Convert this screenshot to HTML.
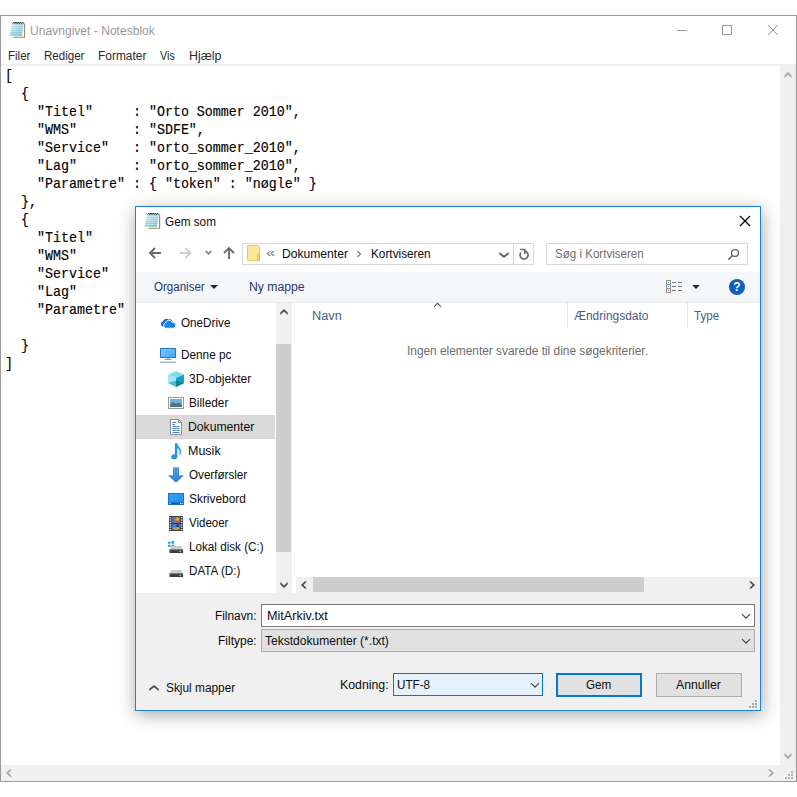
<!DOCTYPE html><html lang="da"><head><meta charset="utf-8"><title>Unavngivet - Notesblok</title><style>
html,body{margin:0;padding:0;background:#fff;}
body{width:797px;height:797px;overflow:hidden;position:relative;font-family:"Liberation Sans",sans-serif;font-size:12px;}
#root{position:absolute;left:0;top:0;width:797px;height:797px;overflow:hidden;}
#root div,#root svg,#root span{position:absolute;box-sizing:border-box;}
#root span{white-space:pre;transform-origin:0 0;line-height:20px;display:block;}
</style></head><body><div id="root">
<div style="left:0px;top:15px;width:797px;height:767px;background:#fff;border:1px solid #9a9a9a;"></div>
<div style="left:1px;top:64px;width:795px;height:2px;background:#f0f0f0;"></div>
<svg style="left:9px;top:21px" width="17" height="18" viewBox="0 0 17 18">
<defs><linearGradient id="npg" x1="0" y1="0" x2="1" y2="1"><stop offset="0" stop-color="#d6eef5"/><stop offset="1" stop-color="#62b2cc"/></linearGradient></defs>
<path d="M4.5 2.5 H15.5 V16.2 H4.5 Z" fill="#fff"/>
<path d="M15.6 2.5 V16.3 H4.2" stroke="#a08a58" stroke-width="1.1" fill="none"/>
<path d="M3.2 1.8 H14.8 L12.8 14.8 H0.5 Z" fill="url(#npg)"/>
<path d="M3 4.6H14.2 M2.6 6.6H13.9 M2.2 8.6H13.6 M1.8 10.6H13.3 M1.4 12.6H13" stroke="#eaf6fa" stroke-width="0.7" opacity=".75"/>
<path d="M3.6 2.6 l1.1-1.6 1.1 1.6 1.1-1.6 1.1 1.6 1.1-1.6 1.1 1.6 1.1-1.6 1.1 1.6 1.1-1.6 1.1 1.6" stroke="#2a3a44" stroke-width="1" fill="none"/>
</svg>
<span style="left:29.99px;top:20.84px;font-size:12px;color:#999;transform:scaleX(1.0065);">Unavngivet - Notesblok</span>
<svg style="left:670px;top:20px" width="115" height="20" viewBox="0 0 115 20">
<path d="M7 10.5H17" stroke="#999" stroke-width="1"/>
<rect x="52.5" y="5.5" width="9" height="9" fill="none" stroke="#999" stroke-width="1"/>
<path d="M98 5 L108 15 M108 5 L98 15" stroke="#999" stroke-width="1"/>
</svg>
<span style="left:7.64px;top:45.84px;font-size:12px;color:#2a2a2a;transform:scaleX(0.9618);">Filer</span>
<span style="left:43.64px;top:45.84px;font-size:12px;color:#2a2a2a;transform:scaleX(0.9620);">Rediger</span>
<span style="left:97.71px;top:45.84px;font-size:12px;color:#2a2a2a;transform:scaleX(0.9937);">Formater</span>
<span style="left:160.30px;top:45.84px;font-size:12px;color:#2a2a2a;transform:scaleX(0.9062);">Vis</span>
<span style="left:188.57px;top:45.84px;font-size:12px;color:#2a2a2a;transform:scaleX(1.0333);">Hjælp</span>
<span style="left:5px;top:66.22px;font-size:14.2px;color:#000;-webkit-text-stroke:0.15px #000;font-family:'Liberation Mono', monospace;transform:scaleX(0.9390);">[</span>
<span style="left:5px;top:84.22px;font-size:14.2px;color:#000;-webkit-text-stroke:0.15px #000;font-family:'Liberation Mono', monospace;transform:scaleX(0.9390);">  {</span>
<span style="left:5px;top:102.22px;font-size:14.2px;color:#000;-webkit-text-stroke:0.15px #000;font-family:'Liberation Mono', monospace;transform:scaleX(0.9390);">    "Titel"     : "Orto Sommer 2010",</span>
<span style="left:5px;top:120.22px;font-size:14.2px;color:#000;-webkit-text-stroke:0.15px #000;font-family:'Liberation Mono', monospace;transform:scaleX(0.9390);">    "WMS"       : "SDFE",</span>
<span style="left:5px;top:138.22px;font-size:14.2px;color:#000;-webkit-text-stroke:0.15px #000;font-family:'Liberation Mono', monospace;transform:scaleX(0.9390);">    "Service"   : "orto_sommer_2010",</span>
<span style="left:5px;top:156.22px;font-size:14.2px;color:#000;-webkit-text-stroke:0.15px #000;font-family:'Liberation Mono', monospace;transform:scaleX(0.9390);">    "Lag"       : "orto_sommer_2010",</span>
<span style="left:5px;top:174.22px;font-size:14.2px;color:#000;-webkit-text-stroke:0.15px #000;font-family:'Liberation Mono', monospace;transform:scaleX(0.9390);">    "Parametre" : { "token" : "nøgle" }</span>
<span style="left:5px;top:192.22px;font-size:14.2px;color:#000;-webkit-text-stroke:0.15px #000;font-family:'Liberation Mono', monospace;transform:scaleX(0.9390);">  },</span>
<span style="left:5px;top:210.22px;font-size:14.2px;color:#000;-webkit-text-stroke:0.15px #000;font-family:'Liberation Mono', monospace;transform:scaleX(0.9390);">  {</span>
<span style="left:5px;top:228.22px;font-size:14.2px;color:#000;-webkit-text-stroke:0.15px #000;font-family:'Liberation Mono', monospace;transform:scaleX(0.9390);">    "Titel"</span>
<span style="left:5px;top:246.22px;font-size:14.2px;color:#000;-webkit-text-stroke:0.15px #000;font-family:'Liberation Mono', monospace;transform:scaleX(0.9390);">    "WMS"</span>
<span style="left:5px;top:264.22px;font-size:14.2px;color:#000;-webkit-text-stroke:0.15px #000;font-family:'Liberation Mono', monospace;transform:scaleX(0.9390);">    "Service"</span>
<span style="left:5px;top:282.22px;font-size:14.2px;color:#000;-webkit-text-stroke:0.15px #000;font-family:'Liberation Mono', monospace;transform:scaleX(0.9390);">    "Lag"</span>
<span style="left:5px;top:300.22px;font-size:14.2px;color:#000;-webkit-text-stroke:0.15px #000;font-family:'Liberation Mono', monospace;transform:scaleX(0.9390);">    "Parametre"</span>
<span style="left:5px;top:336.22px;font-size:14.2px;color:#000;-webkit-text-stroke:0.15px #000;font-family:'Liberation Mono', monospace;transform:scaleX(0.9390);">  }</span>
<span style="left:5px;top:354.22px;font-size:14.2px;color:#000;-webkit-text-stroke:0.15px #000;font-family:'Liberation Mono', monospace;transform:scaleX(0.9390);">]</span>
<div style="left:780px;top:65px;width:16px;height:700px;background:#f0f0f0;"></div>
<div style="left:1px;top:765px;width:795px;height:16px;background:#f0f0f0;"></div>
<svg style="left:779.5px;top:67px" width="16" height="16" viewBox="0 0 16 16"><polygon points="4.50,10.95 8.00,7.45 11.50,10.95 11.50,8.55 8.00,5.05 4.50,8.55" fill="#a6a6a6"/></svg>
<svg style="left:779.5px;top:748px" width="16" height="16" viewBox="0 0 16 16"><polygon points="4.50,5.05 8.00,8.55 11.50,5.05 11.50,7.45 8.00,10.95 4.50,7.45" fill="#a6a6a6"/></svg>
<svg style="left:1px;top:764.5px" width="16" height="16" viewBox="0 0 16 16"><polygon points="11.00,4.40 7.40,8.00 11.00,11.60 8.60,11.60 5.00,8.00 8.60,4.40" fill="#a6a6a6"/></svg>
<svg style="left:763px;top:764.5px" width="16" height="16" viewBox="0 0 16 16"><polygon points="5.00,4.40 8.60,8.00 5.00,11.60 7.40,11.60 11.00,8.00 7.40,4.40" fill="#a6a6a6"/></svg>
<svg style="left:783px;top:769px" width="12" height="12" viewBox="0 0 12 12"><g fill="#b4b4b4"><rect x="8" y="2" width="2" height="2"/><rect x="5" y="5" width="2" height="2"/><rect x="8" y="5" width="2" height="2"/><rect x="2" y="8" width="2" height="2"/><rect x="5" y="8" width="2" height="2"/><rect x="8" y="8" width="2" height="2"/></g></svg>
<div style="left:135px;top:206px;width:626px;height:505px;background:#fff;border:1px solid #1883d7;box-shadow:1px 3.5px 17px 0 rgba(0,0,0,.36);"></div>
<svg style="left:144px;top:212px" width="17" height="18" viewBox="0 0 17 18">
<path d="M4.5 2.5 H15.5 V16.2 H4.5 Z" fill="#fff"/>
<path d="M15.6 2.5 V16.3 H4.2" stroke="#a08a58" stroke-width="1.1" fill="none"/>
<path d="M3.2 1.8 H14.8 L12.8 14.8 H0.5 Z" fill="url(#npg)"/>
<path d="M3 4.6H14.2 M2.6 6.6H13.9 M2.2 8.6H13.6 M1.8 10.6H13.3 M1.4 12.6H13" stroke="#eaf6fa" stroke-width="0.7" opacity=".75"/>
<path d="M3.6 2.6 l1.1-1.6 1.1 1.6 1.1-1.6 1.1 1.6 1.1-1.6 1.1 1.6 1.1-1.6 1.1 1.6 1.1-1.6 1.1 1.6" stroke="#2a3a44" stroke-width="1" fill="none"/>
</svg>
<span style="left:165.11px;top:211.84px;font-size:12px;color:#0c0c0c;transform:scaleX(0.9793);">Gem som</span>
<svg style="left:738px;top:214px" width="14" height="14" viewBox="0 0 14 14"><path d="M2 2 L12 12 M12 2 L2 12" stroke="#000" stroke-width="1.2"/></svg>
<svg style="left:147px;top:245.4px" width="90" height="16" viewBox="0 0 90 16">
<path d="M3 8 H14 M8 3 L3 8 L8 13" stroke="#6b6b6b" stroke-width="1.9" fill="none"/>
<path d="M32.5 8 H43.5 M38.5 3 L43.5 8 L38.5 13" stroke="#cfcfcf" stroke-width="1.9" fill="none"/>
<path d="M58.8 6 L61.5 8.8 L64.2 6" stroke="#7a7a7a" stroke-width="1.6" fill="none"/>
<path d="M82 14 V3 M77 8 L82 3 L87 8" stroke="#6b6b6b" stroke-width="1.9" fill="none"/>
</svg>
<div style="left:242px;top:243px;width:292px;height:22px;background:#fff;border:1px solid #d9d9d9;"></div>
<div style="left:513px;top:244px;width:1px;height:20px;background:#d9d9d9;"></div>
<svg style="left:247px;top:245px" width="14" height="16" viewBox="0 0 14 16"><path d="M0.5 0.5 H11.5 L12.5 1.5 V15.5 H0.5 Z" fill="#ffe69a" stroke="#e8c65c" stroke-width="1"/><path d="M10.5 9.5 H12.5 V15.5 H10.5 Z" fill="#f7d36b" stroke="#e0b84a" stroke-width=".8"/></svg>
<span style="left:265.77px;top:242.70px;font-size:13px;color:#7a7a7a;transform:scaleX(1.2640);">«</span>
<span style="left:281.89px;top:243.84px;font-size:12px;color:#0c0c0c;transform:scaleX(1.0086);">Dokumenter</span>
<svg style="left:356px;top:250px" width="6" height="8" viewBox="0 0 6 8"><path d="M1.5 1 L4.5 4 L1.5 7" stroke="#777" stroke-width="1.2" fill="none"/></svg>
<span style="left:370.62px;top:243.84px;font-size:12px;color:#0c0c0c;transform:scaleX(0.9831);">Kortviseren</span>
<svg style="left:495.8px;top:247.3px" width="16" height="16" viewBox="0 0 16 16"><polygon points="3.40,5.05 8.00,8.45 12.60,5.05 12.60,7.55 8.00,10.95 3.40,7.55" fill="#666"/></svg>
<svg style="left:518px;top:247px" width="13" height="14" viewBox="0 0 13 14"><path d="M2.9 5.6 A4 4 0 1 0 6.9 4.1" stroke="#666" stroke-width="1.6" fill="none"/><path d="M2.2 2.6 H6.8 V7" stroke="#666" stroke-width="1.5" fill="none"/></svg>
<div style="left:546px;top:243px;width:202px;height:22px;background:#fff;border:1px solid #d9d9d9;"></div>
<span style="left:554.52px;top:243.84px;font-size:12px;color:#6d6d6d;transform:scaleX(0.9642);">Søg i Kortviseren</span>
<svg style="left:727px;top:248px" width="13" height="13" viewBox="0 0 13 13"><circle cx="8" cy="5" r="3.4" stroke="#6b6b6b" stroke-width="1.4" fill="none"/><path d="M5.5 7.5 L1.3 11.7" stroke="#6b6b6b" stroke-width="1.7"/></svg>
<div style="left:136px;top:272px;width:624px;height:31px;background:#f5f6f7;"></div>
<div style="left:136px;top:302px;width:624px;height:1px;background:#ebebeb;"></div>
<span style="left:154.32px;top:276.84px;font-size:12px;color:#1e3872;transform:scaleX(0.9615);">Organiser</span>
<svg style="left:209px;top:284px" width="10" height="6" viewBox="0 0 10 6"><path d="M1 1 H9 L5 5 Z" fill="#1e2a3a"/></svg>
<span style="left:248.78px;top:276.84px;font-size:12px;color:#1e3872;transform:scaleX(1.0178);">Ny mappe</span>
<svg style="left:665px;top:280px" width="18" height="13" viewBox="0 0 18 13"><rect x="1.5" y="0.5" width="4" height="12" fill="#fff" stroke="#8f8f8f"/><path d="M1.5 4.5H5.5 M1.5 8.5H5.5" stroke="#8f8f8f"/>
<rect x="3" y="2" width="1" height="1" fill="#3a8a5a"/><rect x="3" y="6" width="1" height="1" fill="#2a7fe4"/><rect x="3" y="10" width="1" height="1" fill="#e02020"/>
<g fill="#7a7a7a"><rect x="7" y="2" width="4" height="1"/><rect x="13" y="2" width="4" height="1"/><rect x="7" y="6" width="4" height="1"/><rect x="13" y="6" width="4" height="1"/><rect x="7" y="10" width="4" height="1"/><rect x="13" y="10" width="4" height="1"/></g></svg>
<svg style="left:690.5px;top:284px" width="10" height="6" viewBox="0 0 10 6"><path d="M1 1 H9 L5 5 Z" fill="#1e2a3a"/></svg>
<svg style="left:729px;top:279px" width="16" height="16" viewBox="0 0 16 16"><circle cx="8" cy="8" r="8" fill="#0a5fc2"/><text x="8" y="12.2" font-family="Liberation Sans, sans-serif" font-weight="bold" font-size="12" fill="#fff" text-anchor="middle">?</text></svg>
<div style="left:136px;top:303px;width:140px;height:290px;background:#fff;"></div>
<div style="left:276px;top:303px;width:16px;height:290px;background:#f0f0f0;"></div>
<div style="left:276px;top:344px;width:15px;height:208px;background:#cdcdcd;"></div>
<svg style="left:275.5px;top:304px" width="16" height="16" viewBox="0 0 16 16"><polygon points="4.30,11.10 8.00,7.40 11.70,11.10 11.70,8.60 8.00,4.90 4.30,8.60" fill="#505050"/></svg>
<svg style="left:275.5px;top:576.9px" width="16" height="16" viewBox="0 0 16 16"><polygon points="4.30,4.90 8.00,8.60 11.70,4.90 11.70,7.40 8.00,11.10 4.30,7.40" fill="#505050"/></svg>
<div style="left:292px;top:303px;width:468px;height:290px;background:#fff;"></div>
<div style="left:294px;top:303px;width:1px;height:274px;background:#f5f5f5;"></div>
<div style="left:567px;top:303px;width:1px;height:25px;background:#e5e5e5;"></div>
<div style="left:687px;top:303px;width:1px;height:25px;background:#e5e5e5;"></div>
<svg style="left:433px;top:302px" width="10" height="6" viewBox="0 0 10 6"><path d="M1 4.9 L4.5 1.4 L8 4.9" stroke="#555" stroke-width="1.1" fill="none"/></svg>
<span style="left:312.23px;top:306.14px;font-size:12px;color:#4c607a;transform:scaleX(1.0667);">Navn</span>
<span style="left:573.75px;top:306.14px;font-size:12px;color:#4c607a;transform:scaleX(0.9973);">Ændringsdato</span>
<span style="left:694.46px;top:306.14px;font-size:12px;color:#4c607a;transform:scaleX(0.9743);">Type</span>
<span style="left:407.01px;top:341.14px;font-size:12px;color:#6d6d6d;transform:scaleX(0.9896);">Ingen elementer svarede til dine søgekriterier.</span>
<div style="left:296px;top:577px;width:464px;height:16px;background:#f0f0f0;"></div>
<div style="left:313px;top:577px;width:331px;height:15px;background:#cdcdcd;"></div>
<svg style="left:296.1px;top:576.5px" width="16" height="16" viewBox="0 0 16 16"><polygon points="11.05,4.40 7.45,8.00 11.05,11.60 8.55,11.60 4.95,8.00 8.55,4.40" fill="#505050"/></svg>
<svg style="left:743.9px;top:576.5px" width="16" height="16" viewBox="0 0 16 16"><polygon points="4.95,4.40 8.55,8.00 4.95,11.60 7.45,11.60 11.05,8.00 7.45,4.40" fill="#505050"/></svg>
<div style="left:136px;top:415px;width:139px;height:24px;background:#d9d9d9;"></div>
<svg style="left:160px;top:315.0px" width="16" height="16" viewBox="0 0 16 16"><path d="M2.6 11.6 A2.6 2.6 0 0 1 2.9 6.6 A3.6 3.6 0 0 1 8.6 4.6 A3 3 0 0 1 12 5.2 L12.6 7 L6 12 Z" fill="#0f6fd0"/><path d="M5.6 13.2 A2.7 2.7 0 0 1 5.5 8 A3.6 3.6 0 0 1 12.2 7.2 A3 3 0 0 1 13.4 13.2 Z" fill="#1683e6" stroke="#fff" stroke-width="0.9"/></svg>
<span style="left:180.91px;top:312.84px;font-size:12px;color:#0c0c0c;transform:scaleX(0.9749);">OneDrive</span>
<svg style="left:160px;top:347.0px" width="16" height="16" viewBox="0 0 16 16"><defs><linearGradient id="pcg" x1="0" y1="0" x2="1" y2="1"><stop offset="0" stop-color="#7accfc"/><stop offset="1" stop-color="#3ba6f2"/></linearGradient></defs><rect x="0.5" y="1.5" width="15" height="9" fill="url(#pcg)" stroke="#2b7cbf" stroke-width="1"/><rect x="4.5" y="12" width="7" height="1" fill="#7f9fbd"/><rect x="6.5" y="11" width="3" height="1" fill="#9fb6cb"/><rect x="0" y="14.6" width="16" height="1.2" fill="#8eabc6"/></svg>
<span style="left:180.82px;top:344.84px;font-size:12px;color:#0c0c0c;transform:scaleX(0.9820);">Denne pc</span>
<svg style="left:168px;top:371.0px" width="16" height="16" viewBox="0 0 16 16"><path d="M8 0.2 L16 3.6 L8 7 L0 3.6 Z" fill="#7fdcec"/><path d="M0 3.6 L8 7 V16 L0 12 Z" fill="#a9e6f0"/><path d="M16 3.6 L8 7 V16 L16 12 Z" fill="#149fc6"/><path d="M0 12 L8 9.4 L16 12 L8 16 Z" fill="#1fb4cf" opacity=".75"/><path d="M8 9.4 L16 12 L8 16 Z" fill="#0d7f9f"/></svg>
<span style="left:188.70px;top:368.84px;font-size:12px;color:#0c0c0c;transform:scaleX(1.0033);">3D-objekter</span>
<svg style="left:168px;top:395.0px" width="16" height="16" viewBox="0 0 16 16"><rect x="0.5" y="2.5" width="15" height="11" fill="#fff" stroke="#9a9a9a"/><rect x="2" y="4" width="12" height="8" fill="#6fb0ea"/><path d="M2 9.5 L5 7 L8 8.5 L11 7.6 L14 9.4 V12 H2 Z" fill="#557e5c"/><rect x="2" y="10.6" width="12" height="1.4" fill="#3f6f9e"/></svg>
<span style="left:188.72px;top:392.84px;font-size:12px;color:#0c0c0c;transform:scaleX(0.9832);">Billeder</span>
<svg style="left:168px;top:419.0px" width="16" height="16" viewBox="0 0 16 16"><path d="M2.5 0.5 H10.5 L13.5 3.5 V15.5 H2.5 Z" fill="#fff" stroke="#8f8f8f"/><path d="M10.5 0.5 V3.5 H13.5" fill="none" stroke="#8f8f8f"/><path d="M4.5 3.5H8 M4.5 5.5H7" stroke="#3d7ac0" stroke-width="1"/><path d="M4.5 7.5H11.5 M4.5 9.5H11.5 M4.5 13.5H11.5" stroke="#4c86c6" stroke-width="1"/><path d="M4.5 11.5H8" stroke="#4c86c6"/><path d="M8.5 11.5H11.5" stroke="#3d8a5a"/></svg>
<span style="left:188.49px;top:416.84px;font-size:12px;color:#0c0c0c;transform:scaleX(1.0148);">Dokumenter</span>
<svg style="left:168px;top:443.0px" width="16" height="16" viewBox="0 0 16 16"><path d="M6.9 0.3 H9.3 V13.2 A3.1 2.5 -15 1 1 6.9 11.2 Z" fill="#2196f3"/><path d="M9.2 0.4 C9.8 3.4 14.4 4.6 12.6 10.6 C12.4 11.4 11.6 11.9 11 11.6 C12.6 8 11.2 6 9.2 5.2 Z" fill="#2196f3"/></svg>
<span style="left:188.46px;top:440.84px;font-size:12px;color:#0c0c0c;transform:scaleX(1.0413);">Musik</span>
<svg style="left:168px;top:467.0px" width="16" height="16" viewBox="0 0 16 16"><defs><linearGradient id="dlg" x1="0" y1="0" x2="0" y2="1"><stop offset="0" stop-color="#4b9ee6"/><stop offset="1" stop-color="#2b7fd3"/></linearGradient></defs><path d="M5 0.2 H11 V8.3 H16 L8 15.8 L0 8.3 H5 Z" fill="url(#dlg)"/></svg>
<span style="left:189.01px;top:464.84px;font-size:12px;color:#0c0c0c;transform:scaleX(0.9705);">Overførsler</span>
<svg style="left:168px;top:491.0px" width="16" height="16" viewBox="0 0 16 16"><defs><linearGradient id="dkg" x1="0" y1="0" x2="1" y2="1"><stop offset="0" stop-color="#35a3f6"/><stop offset="1" stop-color="#1e8deb"/></linearGradient></defs><rect x="0.5" y="2.5" width="15" height="11" fill="url(#dkg)" stroke="#1b78cc"/><rect x="1" y="11.6" width="14" height="1.6" fill="#14589c"/><rect x="1.6" y="12" width="1" height="1" fill="#fff"/><rect x="12" y="12" width="1" height="1" fill="#fff"/><rect x="13.6" y="12" width="1" height="1" fill="#fff"/></svg>
<span style="left:189.00px;top:488.84px;font-size:12px;color:#0c0c0c;transform:scaleX(0.9911);">Skrivebord</span>
<svg style="left:168px;top:515.0px" width="16" height="16" viewBox="0 0 16 16"><rect x="1" y="1" width="14" height="15" fill="#3c3c3c"/><rect x="3.6" y="2" width="8.8" height="6" fill="#3a78d6"/><rect x="3.6" y="9" width="8.8" height="6" fill="#3a78d6"/><rect x="7.6" y="2.6" width="3.4" height="3.4" fill="#e0b030"/><rect x="5" y="5.6" width="6" height="2.2" fill="#c05a40"/><rect x="5" y="12.4" width="6" height="2.4" fill="#d0a030"/><rect x="8.6" y="9.4" width="2" height="2.4" fill="#333"/><g fill="#f4f4f4"><rect x="1.7" y="2" width="1.2" height="1.3"/><rect x="1.7" y="4.4" width="1.2" height="1.3"/><rect x="1.7" y="6.8" width="1.2" height="1.3"/><rect x="1.7" y="9.2" width="1.2" height="1.3"/><rect x="1.7" y="11.6" width="1.2" height="1.3"/><rect x="1.7" y="14" width="1.2" height="1.3"/><rect x="13.1" y="2" width="1.2" height="1.3"/><rect x="13.1" y="4.4" width="1.2" height="1.3"/><rect x="13.1" y="6.8" width="1.2" height="1.3"/><rect x="13.1" y="9.2" width="1.2" height="1.3"/><rect x="13.1" y="11.6" width="1.2" height="1.3"/><rect x="13.1" y="14" width="1.2" height="1.3"/></g></svg>
<span style="left:189.40px;top:512.84px;font-size:12px;color:#0c0c0c;transform:scaleX(0.9561);">Videoer</span>
<svg style="left:168px;top:539.0px" width="16" height="16" viewBox="0 0 16 16"><g fill="#10a5ee"><path d="M0 2.9 L2.5 2.5 V4.8 H0 Z"/><path d="M3.5 2.3 L6.1 1.9 V4.8 H3.5 Z"/><path d="M0 5.8 H2.5 V8.1 L0 7.7 Z"/><path d="M3.5 5.8 H6.1 V8.6 L3.5 8.2 Z"/></g><path d="M3.4 7 H13.2 L15.1 10.5 H1.5 Z" fill="#c9cdd0"/><rect x="1.5" y="10.5" width="13.6" height="3.5" fill="#3d3d3d"/><rect x="1.5" y="10.5" width="13.6" height="0.8" fill="#6a6a6a"/><rect x="11.4" y="11.7" width="1.8" height="1.4" fill="#4ee04e"/></svg>
<span style="left:188.53px;top:536.84px;font-size:12px;color:#0c0c0c;transform:scaleX(0.9733);">Lokal disk (C:)</span>
<svg style="left:168px;top:563.0px" width="16" height="16" viewBox="0 0 16 16"><path d="M3.4 7 H13.2 L15.1 10.5 H1.5 Z" fill="#c9cdd0"/><rect x="1.5" y="10.5" width="13.6" height="3.5" fill="#3d3d3d"/><rect x="1.5" y="10.5" width="13.6" height="0.8" fill="#6a6a6a"/><rect x="11.4" y="11.7" width="1.8" height="1.4" fill="#4ee04e"/></svg>
<span style="left:188.53px;top:560.84px;font-size:12px;color:#0c0c0c;transform:scaleX(0.9717);">DATA (D:)</span>
<div style="left:136px;top:593px;width:624px;height:117px;background:#f0f0f0;"></div>
<span style="left:214.91px;top:605.84px;font-size:12px;color:#0c0c0c;transform:scaleX(0.9875);">Filnavn:</span>
<div style="left:261px;top:604px;width:494px;height:23px;background:#fff;border:1px solid #7a7a7a;"></div>
<span style="left:266.65px;top:605.84px;font-size:12px;color:#0c0c0c;transform:scaleX(1.0520);">MitArkiv.txt</span>
<svg style="left:741px;top:611.5px" width="12" height="8" viewBox="0 0 12 8"><path d="M1 2.2 L5 6.2 L9 2.2" stroke="#444" stroke-width="1.15" fill="none"/></svg>
<span style="left:217.70px;top:630.84px;font-size:12px;color:#0c0c0c;transform:scaleX(0.9986);">Filtype:</span>
<div style="left:261px;top:629px;width:494px;height:23px;background:#e1e1e1;border:1px solid #adadad;"></div>
<span style="left:265.35px;top:630.84px;font-size:12px;color:#0c0c0c;transform:scaleX(1.0041);">Tekstdokumenter (*.txt)</span>
<svg style="left:741px;top:636.5px" width="12" height="8" viewBox="0 0 12 8"><path d="M1 2.2 L5 6.2 L9 2.2" stroke="#444" stroke-width="1.15" fill="none"/></svg>
<svg style="left:145.7px;top:680px" width="16" height="16" viewBox="0 0 16 16"><polygon points="3.30,11.00 8.00,7.30 12.70,11.00 12.70,8.70 8.00,5.00 3.30,8.70" fill="#4a4a4a"/></svg>
<span style="left:165.61px;top:677.84px;font-size:12px;color:#0c0c0c;transform:scaleX(0.9885);">Skjul mapper</span>
<span style="left:339.57px;top:674.84px;font-size:12px;color:#0c0c0c;transform:scaleX(1.0254);">Kodning:</span>
<div style="left:393px;top:673px;width:150px;height:23px;background:#e5f1fb;border:1px solid #0078d7;"></div>
<span style="left:396.63px;top:674.84px;font-size:12px;color:#0c0c0c;transform:scaleX(0.9723);">UTF-8</span>
<svg style="left:529.5px;top:680.7px" width="12" height="8" viewBox="0 0 12 8"><path d="M1 2.2 L5 6.2 L9 2.2" stroke="#444" stroke-width="1.15" fill="none"/></svg>
<div style="left:556px;top:673px;width:86px;height:24px;background:#e1e1e1;border:2px solid #0078d7;"></div>
<span style="left:586.01px;top:674.84px;font-size:12px;color:#0c0c0c;transform:scaleX(0.9737);">Gem</span>
<div style="left:656px;top:673px;width:86px;height:24px;background:#e1e1e1;border:1px solid #adadad;"></div>
<span style="left:676.20px;top:674.84px;font-size:12px;color:#0c0c0c;transform:scaleX(1.0182);">Annuller</span>
<svg style="left:747px;top:698px" width="12" height="12" viewBox="0 0 12 12"><g fill="#a6a6a6"><rect x="8" y="2" width="2" height="2"/><rect x="5" y="5" width="2" height="2"/><rect x="8" y="5" width="2" height="2"/><rect x="2" y="8" width="2" height="2"/><rect x="5" y="8" width="2" height="2"/><rect x="8" y="8" width="2" height="2"/></g></svg>
</div></body></html>
